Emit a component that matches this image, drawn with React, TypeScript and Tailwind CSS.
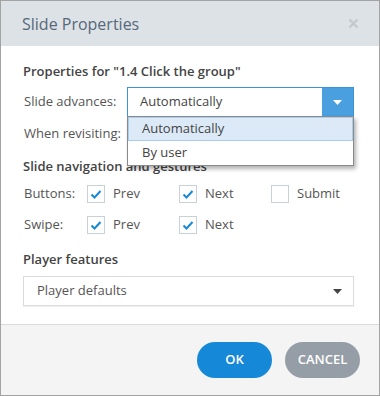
import React from "react";

const font = { fontFamily: '"Open Sans", "Noto Sans", sans-serif' };

function Check({ checked }: { checked: boolean }) {
  return (
    <span className="flex h-[18px] w-[18px] shrink-0 items-center justify-center border border-[#c9d1d8] bg-white">
      {checked && (
        <svg width="14" height="14" viewBox="0 0 14 14">
          <polyline
            points="2.5,7.5 5.5,10.5 11.5,4"
            fill="none"
            stroke="#1a88d6"
            strokeWidth="2"
          />
        </svg>
      )}
    </span>
  );
}

function CheckItem({ label, checked }: { label: string; checked: boolean }) {
  return (
    <div className="flex w-[92px] shrink-0 items-center gap-2">
      <Check checked={checked} />
      <span className="text-[13px] text-[#555]">{label}</span>
    </div>
  );
}

export default function App() {
  return (
    <div
      className="flex h-[396px] w-[380px] flex-col border border-[#a3a3a3] bg-white"
      style={font}
    >
      <div className="flex h-[45px] shrink-0 items-center justify-between bg-[#dde2e6] pl-[21px] pr-[20px]">
        <span className="text-[16px] text-[#56687a]">Slide Properties</span>
        <svg width="11" height="11" viewBox="0 0 11 11">
          <path d="M1.5 1.5 L9.5 9.5 M9.5 1.5 L1.5 9.5" stroke="#c2c8cd" strokeWidth="2.2" />
        </svg>
      </div>

      <div className="flex flex-1 flex-col overflow-hidden bg-white px-[22px] pt-[16px]">
        <div className="flex h-[20px] items-center text-[13px] font-semibold text-[#444]">
          Properties for "1.4 Click the group"
        </div>

        <div className="relative mt-[5px] flex h-[30px] items-center">
          <span className="w-[104px] shrink-0 pl-[1px] text-[13px] text-[#555]">Slide advances:</span>
          <div className="flex h-[30px] w-[227px] shrink-0 items-stretch border border-[#3b94d9] bg-white">
            <span className="flex flex-1 items-center pl-[12px] text-[13px] text-[#444]">
              Automatically
            </span>
            <span className="flex w-[31px] items-center justify-center bg-[#4a9fde]">
              <svg width="9" height="5" viewBox="0 0 9 5">
                <path d="M0 0 H9 L4.5 5 Z" fill="#fff" />
              </svg>
            </span>
          </div>
          <div className="absolute left-[104px] top-[29px] z-10 flex w-[227px] flex-col border border-[#8a8a8a] bg-white shadow-[2px_3px_4px_rgba(0,0,0,0.3)]">
            <div className="flex h-[24px] items-center border border-[#a8cdee] bg-[#dceaf8] pl-[13px] text-[13px] text-[#444]">
              Automatically
            </div>
            <div className="flex h-[24px] items-center pl-[14px] text-[13px] text-[#444]">
              By user
            </div>
          </div>
        </div>

        <div className="mt-[2px] flex h-[30px] items-center">
          <span className="w-[104px] shrink-0 pl-[1px] text-[13px] text-[#555]">When revisiting:</span>
          <div className="h-[30px] w-[227px] shrink-0 border border-[#ddd]" />
        </div>

        <div className="mt-[8px] flex h-[20px] items-center text-[13px] font-semibold text-[#444]">
          Slide navigation and gestures
        </div>

        <div className="mt-[8px] flex h-[18px] items-center">
          <span className="w-[64px] shrink-0 pl-[1px] text-[13px] text-[#555]">Buttons:</span>
          <CheckItem label="Prev" checked />
          <CheckItem label="Next" checked />
          <CheckItem label="Submit" checked={false} />
        </div>

        <div className="mt-[13px] flex h-[18px] items-center">
          <span className="w-[64px] shrink-0 pl-[1px] text-[13px] text-[#555]">Swipe:</span>
          <CheckItem label="Prev" checked />
          <CheckItem label="Next" checked />
        </div>

        <div className="mt-[16px] flex h-[20px] items-center text-[13px] font-semibold text-[#444]">
          Player features
        </div>

        <div className="mt-[6px] flex h-[30px] w-[331px] shrink-0 items-center justify-between border border-[#dcdcdc] pl-[13px] pr-[11px] shadow-[0_1px_1px_rgba(0,0,0,0.06)]">
          <span className="text-[13px] text-[#555]">Player defaults</span>
          <svg width="9" height="5" viewBox="0 0 9 5">
            <path d="M0 0 H9 L4.5 5 Z" fill="#444" />
          </svg>
        </div>
      </div>

      <div className="flex h-[71px] shrink-0 items-center justify-end gap-[13px] border-t border-[#dcdcdc] bg-[#f4f4f4] pr-[19px]">
        <button className="flex h-[36px] w-[75px] items-center justify-center rounded-full bg-[#1688d8] text-[13px] font-semibold text-white">
          OK
        </button>
        <button className="flex h-[36px] w-[75px] items-center justify-center rounded-full bg-[#959ea6] text-[13px] font-semibold text-white">
          CANCEL
        </button>
      </div>
    </div>
  );
}
